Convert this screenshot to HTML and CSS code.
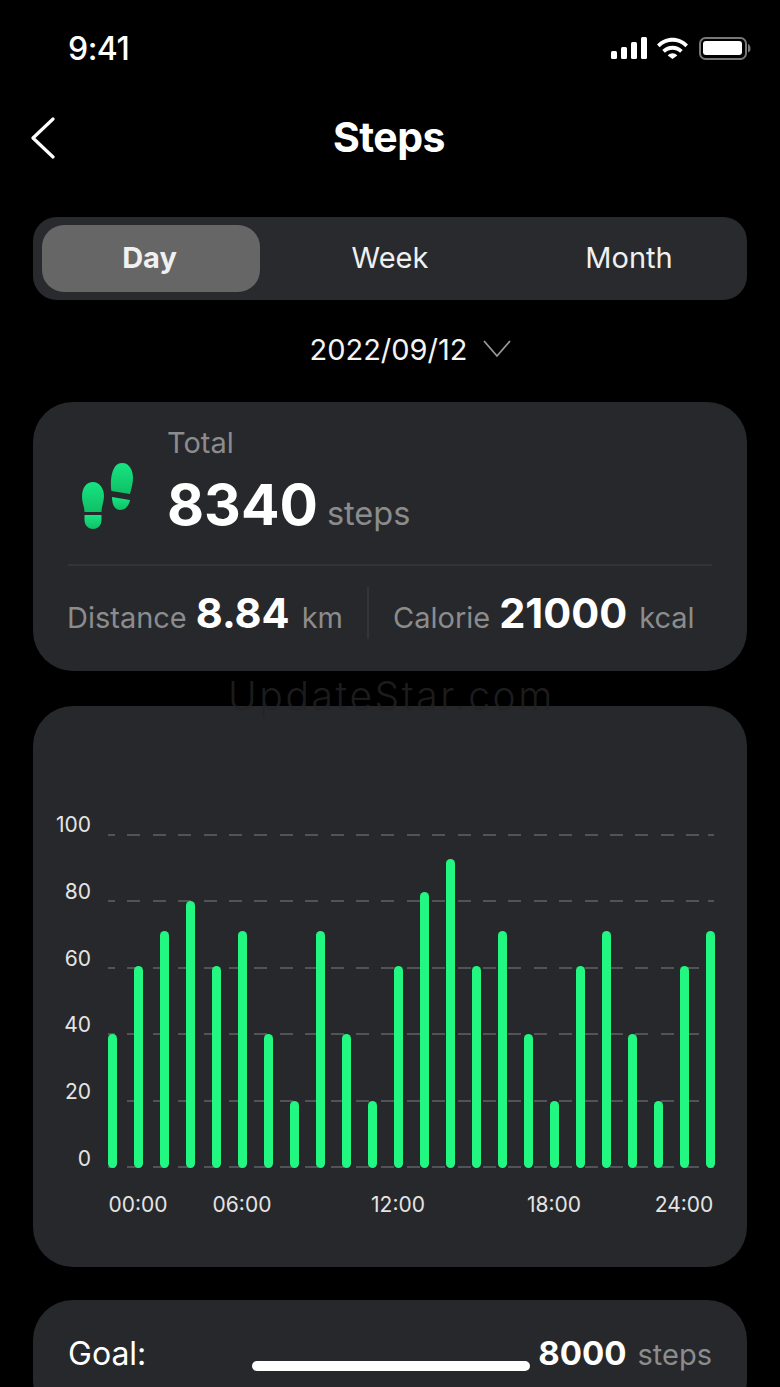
FILE: index.html
```html
<!DOCTYPE html>
<html lang="en">
<head>
<meta charset="UTF-8">
<meta name="viewport" content="width=device-width, initial-scale=1.0">
<title>Steps</title>

<link rel="stylesheet" href="styles.css">
</head>

<body>

<div class="status">
  <span class="time">9:41</span>
  <svg class="status-icons" width="140" height="24" viewBox="0 0 140 24">
    <g fill="#fff">
      <rect x="0" y="14" width="6" height="8" rx="1.5"/>
      <rect x="10" y="10" width="6" height="12" rx="1.5"/>
      <rect x="20" y="5" width="6" height="17" rx="1.5"/>
      <rect x="30" y="0" width="6" height="22" rx="1.5"/>
      <path d="M46 7.500 C54.500 -1.500 68.500 -1.500 77 7.500 L74.400 10.300 C67.300 3 55.700 3 48.600 10.300Z"/>
      <path d="M51.300 13 C56.800 7.300 66.200 7.300 71.700 13 L69.100 15.800 C65 11.600 58 11.600 53.900 15.800Z"/>
      <path d="M56.700 18.400 C59.600 15.600 63.400 15.600 66.300 18.400 L61.500 22 Z"/>
      <rect x="92" y="4" width="39" height="14" rx="3"/>
    </g>
    <rect x="89" y="1" width="46" height="21" rx="5.500" fill="none" stroke="#777" stroke-width="2"/>
    <path d="M137 7 C139 8 139.500 9.500 139.500 11.500 C139.500 13.500 139 14.500 137 15.500Z" fill="#777"/>
  </svg>
</div>

<div class="nav">
  <svg class="back" width="24" height="42" viewBox="0 0 24 42">
    <path d="M22 2 L2 21 L22 40" fill="none" stroke="#fff" stroke-width="3.200" stroke-linecap="round" stroke-linejoin="round"/>
  </svg>
  <h1>Steps</h1>
</div>

<div class="tabs">
  <div class="tab active">Day</div>
  <div class="tab">Week</div>
  <div class="tab">Month</div>
</div>

<div class="date">
  <span>2022/09/12</span>
  <svg width="28" height="18" viewBox="0 0 28 18">
    <path d="M1 1 L14 16 L27 1" fill="none" stroke="#999" stroke-width="1.800"/>
  </svg>
</div>

<div class="card total-card">
  <div class="total-top">
    <svg class="feet" width="56" height="72" viewBox="0 0 56 72">
      <defs>
        <linearGradient id="foot" x1="0" y1="0" x2="0" y2="1">
          <stop offset="0" stop-color="#17e483"/>
          <stop offset="1" stop-color="#0fc065"/>
        </linearGradient>
      </defs>
      <g fill="url(#foot)">
        <path d="M2 37 C2 27 7 22 13 22 C19 22 24 28 24 36 C24 42 21.500 46 21.500 52 L4.500 52 C4.500 46 2 43 2 37Z"/>
        <path d="M4.500 55 L21.500 55 L21.500 60 C21.500 66 17 69 13 69 C9 69 4.500 66 4.500 60Z"/>
        <path d="M31.500 31 C30 22 31 3 42 3 C50 3 53 11 53 18 C53 24 51 29 50 34Z"/>
        <path d="M32 37 L50 40 C49 46 45 50 40 50 C35 50 32 45 32 37Z"/>
      </g>
    </svg>
    <div class="total-text">
      <div class="muted">Total</div>
      <div class="total-value"><b>8340</b><span class="muted steps">steps</span></div>
    </div>
  </div>
  <div class="stats">
    <div class="stat"><span class="muted">Distance</span><b>8.84</b><span class="muted">km</span></div>
    <div class="stat-line"></div>
    <div class="stat"><span class="muted">Calorie</span><b>21000</b><span class="muted">kcal</span></div>
  </div>
</div>

<div class="watermark">UpdateStar.com</div>

<div class="card chart-card">
  <div class="chart">
    <div class="y-axis">
      <span>100</span>
      <span>80</span>
      <span>60</span>
      <span>40</span>
      <span>20</span>
      <span>0</span>
    </div>
    <div class="plot" id="plot">
      <div class="lines">
        <i></i><i></i><i></i><i></i><i></i><i></i>
      </div>
      <div class="bars" id="bars"></div>
    </div>
  </div>
  <div class="x-axis">
    <span class="x1">00:00</span>
    <span class="x2">06:00</span>
    <span class="x3">12:00</span>
    <span class="x4">18:00</span>
    <span class="x5">24:00</span>
  </div>
</div>

<div class="card goal-card">
  <span class="goal-label">Goal:</span>
  <div class="goal-value"><b>8000</b><span class="muted">steps</span></div>
</div>

<div class="home-bar"></div>

<script>
// value per hour, same scale as the y axis
const steps = [40, 60.5, 71, 80, 60.5, 71, 40, 20, 71, 40, 20, 60.5, 82.5, 92.5, 60.5, 71, 40, 20, 60.5, 71, 40, 20, 60.5, 71];

const bars = document.getElementById("bars");
steps.forEach((v) => {
  const bar = document.createElement("div");
  bar.className = "bar";
  bar.style.height = v + "%";
  bars.appendChild(bar);
});
</script>

</body>
</html>
```

FILE: styles.css
```css
html, body {
  height: 100%;
}

body {
  margin: 0;
  height: 1387px;
  overflow: hidden;
  position: relative;
  background: #000;
  color: #fff;
  font-family: Inter, "Liberation Sans", sans-serif;
}

b {
  font-weight: 700;
}

.muted {
  color: #8b8c8e;
}

.status {
  height: 96px;
  display: flex;
  justify-content: space-between;
  align-items: center;
  padding: 0 27px 0 68px;
  box-sizing: border-box;
}

.time {
  font-size: 32px;
  font-weight: 500;
  letter-spacing: -0.5px;
}

.status-icons {
  margin-top: 2px;
  margin-right: 2px;
}

.nav {
  height: 84px;
  position: relative;
  display: flex;
  align-items: center;
  justify-content: center;
}

.nav h1 {
  margin: -2px 2px 0 0;
  font-size: 41px;
  font-weight: 700;
  letter-spacing: -0.5px;
}

.back {
  position: absolute;
  left: 31px;
  top: 21px;
}

.tabs {
  margin: 37px 33px 0;
  height: 83px;
  padding: 8px 9px;
  box-sizing: border-box;
  background: #292a2e;
  border-radius: 24px;
  display: grid;
  grid-template-columns: repeat(3, 1fr);
  gap: 21px;
}

.tab {
  display: flex;
  align-items: center;
  justify-content: center;
  font-size: 29px;
  color: #f0f0f0;
  padding-bottom: 2px;
}

.tab.active {
  background: #666;
  border-radius: 22px;
  font-weight: 700;
  padding-right: 3px;
}

.date {
  height: 102px;
  display: flex;
  align-items: center;
  justify-content: center;
  gap: 15px;
  font-size: 29px;
  color: #f4f4f4;
  padding-bottom: 4px;
  box-sizing: border-box;
}

.date svg {
  margin-right: -40px;
}

.card {
  margin: 0 33px;
  background: #27282b;
  border-radius: 40px;
  position: relative;
}

.total-card {
  height: 269px;
  padding: 0 35px;
  box-sizing: border-box;
}

.total-top {
  height: 162px;
  display: flex;
  align-items: flex-start;
  border-bottom: 2px solid #333437;
}

.feet {
  margin: 58px 31px 0 12px;
}

.total-text {
  padding-top: 24px;
  font-size: 29px;
  line-height: 34px;
}

.total-value {
  display: flex;
  align-items: baseline;
  gap: 9px;
  margin-top: 12px;
}

.total-value b {
  font-size: 57px;
  line-height: 66px;
}

.steps {
  font-size: 32.5px;
}

.stats {
  height: 93px;
  display: flex;
  align-items: center;
  font-size: 29px;
  margin-left: -1px;
}

.stat {
  display: flex;
  align-items: baseline;
  gap: 9px;
}

.stat b {
  font-size: 41.5px;
}

.stat .muted:last-child {
  margin-left: 3px;
}

.stat-line {
  width: 2px;
  height: 52px;
  margin: 0 24px;
  background: #333437;
}

.watermark {
  position: absolute;
  z-index: 2;
  left: 228px;
  top: 671px;
  font-size: 39px;
  font-weight: 300;
  line-height: 50px;
  letter-spacing: 2.6px;
  color: rgba(36, 36, 38, 0.8);
}

.chart-card {
  margin-top: 35px;
  height: 561px;
  padding: 109px 33px 0 24px;
  box-sizing: border-box;
}

.chart {
  display: flex;
  gap: 17px;
}

.y-axis {
  width: 34px;
  height: 354px;
  display: flex;
  flex-direction: column;
  justify-content: space-between;
  align-items: flex-end;
  font-size: 21px;
  line-height: 20px;
  color: #e4e4e4;
}

.plot {
  flex: 1;
  height: 334px;
  margin-top: 19px;
  position: relative;
}

.lines {
  position: absolute;
  inset: 0;
  display: flex;
  flex-direction: column;
  justify-content: space-between;
}

.lines i {
  display: block;
  height: 2px;
  background: repeating-linear-gradient(90deg, #525356 0 13px, transparent 13px 25.4px) -6px 0;
}

.bars {
  position: absolute;
  inset: 0;
  display: flex;
  align-items: flex-end;
  gap: 17px;
}

.bar {
  flex: none;
  width: 9px;
  background: #22f781;
  border-radius: 5px;
}

.x-axis {
  margin: 23px 0 0 42px;
  display: grid;
  grid-template-columns: repeat(24, 26px);
  font-size: 21px;
  line-height: 26px;
  color: #e4e4e4;
}

.x-axis span {
  grid-row: 1;
  justify-self: center;
  white-space: nowrap;
}

.x1 { grid-column: 2; }
.x2 { grid-column: 6; }
.x3 { grid-column: 12; }
.x4 { grid-column: 18; }
.x5 { grid-column: 23; }

.goal-card {
  margin-top: 33px;
  height: 120px;
  padding: 33px 35px 0;
  box-sizing: border-box;
  display: flex;
  justify-content: space-between;
  align-items: baseline;
  font-size: 32px;
}

.goal-value {
  display: flex;
  align-items: baseline;
  gap: 11px;
  font-size: 29px;
}

.goal-value b {
  font-size: 33px;
}

.home-bar {
  position: absolute;
  left: 252px;
  bottom: 16px;
  width: 278px;
  height: 10px;
  border-radius: 5px;
  background: #fff;
}
```
